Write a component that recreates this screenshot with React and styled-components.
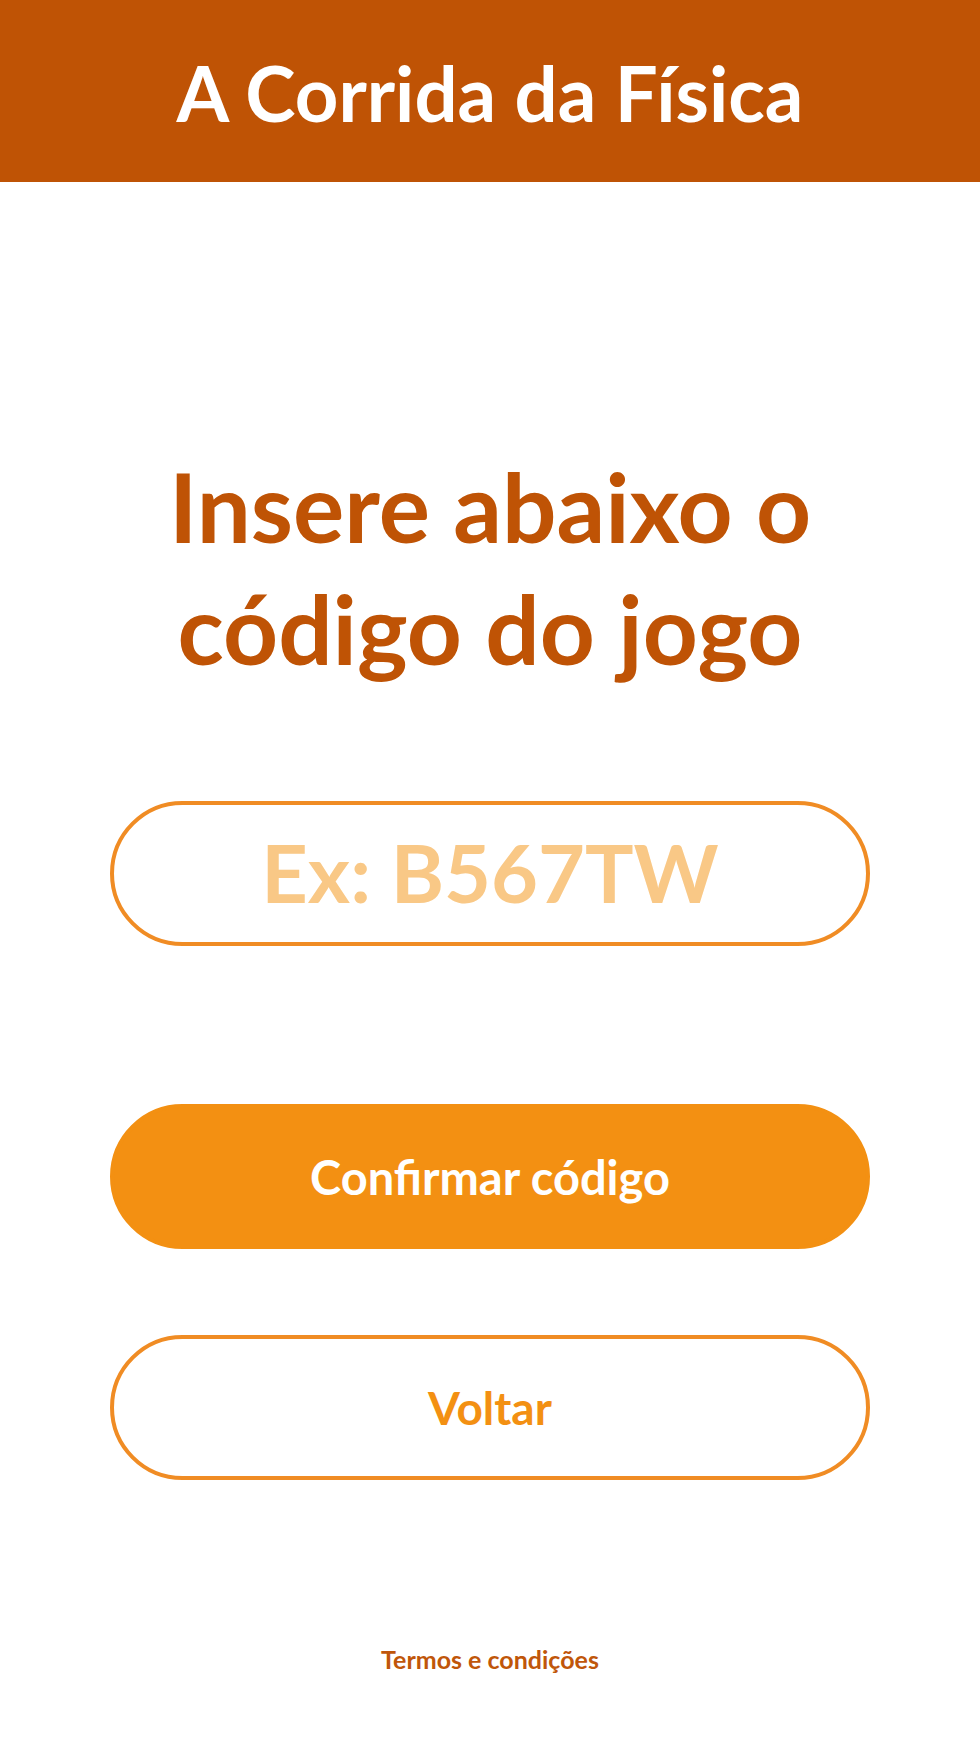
import React from 'react'
import styled, { createGlobalStyle } from 'styled-components'

const GlobalStyle = createGlobalStyle`
  * {
    box-sizing: border-box;
  }

  body {
    margin: 0;
    background: #ffffff;
    font-family: 'Lato', 'Open Sans', sans-serif;
  }
`;

export default function App() {
  return (
    <>
      <GlobalStyle />
      <Page>
        <Header>
          <Title>A Corrida da Física</Title>
        </Header>
        <Main>
          <Heading>Insere abaixo o<br />código do jogo</Heading>
          <CodeInput placeholder="Ex: B567TW" />
          <Actions>
            <Button $filled>Confirmar código</Button>
            <Button>Voltar</Button>
          </Actions>
        </Main>
        <Footer>
          <TermsLink href="#">Termos e condições</TermsLink>
        </Footer>
      </Page>
    </>
  )
}

const Page = styled.div`
  display: flex;
  flex-direction: column;
  min-height: 1744px;
`;

const Header = styled.header`
  height: 182px;
  background-color: #bf5305;
  display: flex;
  align-items: center;
  justify-content: center;
`;

const Title = styled.h1`
  margin: 0;
  padding-top: 4px;
  color: #ffffff;
  font-size: 76px;
  font-weight: 700;
  line-height: 1;
`;

const Main = styled.main`
  width: 760px;
  margin: 0 auto;
  padding-top: 263px;
  display: flex;
  flex-direction: column;
  align-items: center;
`;

const Heading = styled.h2`
  margin: 0;
  color: #bf5305;
  font-size: 96px;
  font-weight: 700;
  line-height: 122px;
  text-align: center;
`;

const CodeInput = styled.input`
  width: 100%;
  height: 145px;
  margin-top: 112px;
  padding: 0 0 4px;
  border: 4px solid #f08c24;
  border-radius: 999px;
  background: #ffffff;
  text-align: center;
  font-family: inherit;
  font-size: 81px;
  font-weight: 700;
  color: #bf5305;
  outline: none;

  &::placeholder {
    color: #f9c886;
  }
`;

const Actions = styled.div`
  width: 100%;
  margin-top: 158px;
  display: flex;
  flex-direction: column;
  gap: 86px;
`;

const Button = styled.button`
  width: 100%;
  height: 145px;
  border-radius: 999px;
  border: 4px solid ${p => p.$filled ? '#f39012' : '#f08c24'};
  background-color: ${p => p.$filled ? '#f39012' : '#ffffff'};
  color: ${p => p.$filled ? '#ffffff' : '#f39012'};
  font-family: inherit;
  font-size: ${p => p.$filled ? '47px' : '46px'};
  font-weight: 700;
  cursor: pointer;
`;

const Footer = styled.footer`
  margin-top: auto;
  padding-bottom: 70px;
  display: flex;
  justify-content: center;
`;

const TermsLink = styled.a`
  color: #c0560a;
  font-size: 25px;
  font-weight: 700;
  text-decoration: none;
`;
